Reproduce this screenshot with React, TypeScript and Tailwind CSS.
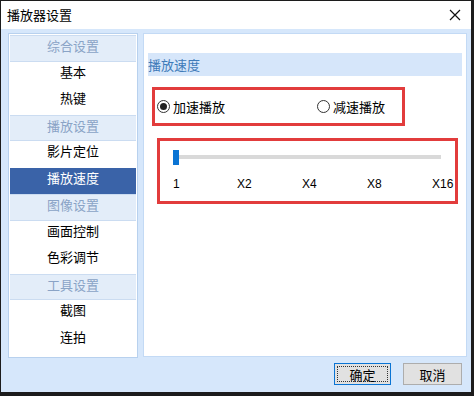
const font = { fontFamily: '"Noto Sans CJK SC", "Noto Sans", sans-serif' };

const groups = [
  { title: "综合设置", items: ["基本", "热键"] },
  { title: "播放设置", items: ["影片定位", "播放速度"] },
  { title: "图像设置", items: ["画面控制", "色彩调节"] },
  { title: "工具设置", items: ["截图", "连拍"] },
];

const marks = [
  { label: "1", w: "w-[64px]" },
  { label: "X2", w: "w-[65px]" },
  { label: "X4", w: "w-[65px]" },
  { label: "X8", w: "w-[65px]" },
  { label: "X16", w: "w-auto" },
];

function Radio({ checked, label }: { checked?: boolean; label: string }) {
  return (
    <div className="flex items-center gap-[3px]">
      <span className="w-[13px] h-[13px] rounded-full border border-[#333] bg-white flex items-center justify-center">
        {checked && <span className="w-[7px] h-[7px] rounded-full bg-[#222]" />}
      </span>
      <span className="text-[13px] text-black leading-none">{label}</span>
    </div>
  );
}

export default function App() {
  return (
    <div className="w-[474px] h-[396px] bg-[#1c1c1c] pt-px pl-px overflow-hidden" style={font}>
      <div className="w-[470px] h-[391px] flex flex-col bg-[#d6e7fb]">
        {/* title bar */}
        <div className="h-[28px] bg-white flex items-center justify-between pl-[6px] pr-[10px]">
          <span className="text-[13px] text-black">播放器设置</span>
          <svg width="12" height="12" viewBox="0 0 12 12">
            <path d="M1 1L11 11M11 1L1 11" stroke="#111" strokeWidth="1.2" />
          </svg>
        </div>

        <div className="flex pt-[4px] pl-[7px] gap-[5px]">
          {/* left nav */}
          <div className="w-[130px] h-[325px] border border-[#b8d1ee] bg-white p-px">
            {groups.map((g) => (
              <div key={g.title}>
                <div className="h-[26.5px] bg-[#e3edf9] border-y border-[#cbdcf1] text-[13px] text-[#8aa3c6] text-center leading-[20px]">
                  {g.title}
                </div>
                {g.items.map((it) => (
                  <div
                    key={it}
                    className={`h-[26.5px] text-[13px] text-center leading-[20px] ${
                      it === "播放速度" ? "bg-[#3a63a8] text-white" : "text-black"
                    }`}
                  >
                    {it}
                  </div>
                ))}
              </div>
            ))}
          </div>

          {/* right content */}
          <div className="w-[324px] h-[324px] border border-[#c3daf5] bg-white px-[4px] pt-[19px]">
            <div className="h-[23px] bg-[#d6e6fa] flex items-center">
              <span className="text-[13px] text-[#3f7bb9]">播放速度</span>
            </div>

            <div className="ml-[4px] mt-[11px] w-[253px] h-[39px] border-[3px] border-[#e23c3c] flex items-center pl-[2px]">
              <div className="w-[160px]">
                <Radio checked label="加速播放" />
              </div>
              <Radio label="减速播放" />
            </div>

            <div className="ml-[9px] mt-[12px] w-[301px] h-[66px] border-[3px] border-[#e23c3c] pt-[9px] pl-[13px] pr-[5px]">
              <div className="relative h-[15px] w-[268px]">
                <div className="absolute left-[2px] right-0 top-[5px] h-[4px] bg-[#d9d9d9]" />
                <div className="absolute left-0 top-0 w-[6px] h-[15px] bg-[#0a74d4]" />
              </div>
              <div
                className="flex mt-[10px] text-[12px] text-black"
                style={{ fontFamily: '"Liberation Sans", Arial, sans-serif' }}
              >
                {marks.map((m) => (
                  <span key={m.label} className={`${m.w} shrink-0`}>
                    {m.label}
                  </span>
                ))}
              </div>
            </div>
          </div>
        </div>

        {/* buttons */}
        <div className="flex justify-end gap-[12px] pr-[9px] mt-[5px]">
          <button className="w-[57px] h-[22px] bg-[#e1e1e1] border border-[#0a74d4] text-[13px] text-black flex items-center justify-center p-[2px]">
            <span className="w-full h-full border border-dotted border-[#333] flex items-center justify-center leading-none">
              确定
            </span>
          </button>
          <button className="w-[59px] h-[22px] bg-[#e1e1e1] border border-[#adadad] text-[13px] text-black flex items-center justify-center leading-none">
            取消
          </button>
        </div>
      </div>
    </div>
  );
}
